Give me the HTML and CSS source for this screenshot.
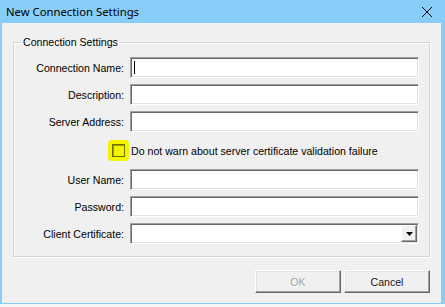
FILE: index.html
```html
<!DOCTYPE html>
<html lang="en">
<head>
  <meta charset="UTF-8">
  <title>New Connection Settings</title>
  <link rel="stylesheet" href="styles.css">
</head>
<body>
  <div class="window">
    <div class="titlebar">
      <span class="title">New Connection Settings</span>
      <svg class="close" width="12" height="12" viewBox="0 0 12 12">
        <path d="M1 1 L11 11 M11 1 L1 11" stroke="#000" stroke-width="1" fill="none"/>
      </svg>
    </div>
    <div class="client">
      <fieldset class="group">
        <legend>Connection Settings</legend>
        <div class="form">
          <label>Connection Name:</label>
          <div class="field"><span class="caret"></span></div>
          <label>Description:</label>
          <div class="field"></div>
          <label>Server Address:</label>
          <div class="field"></div>
          <div class="check-row">
            <span class="mark"><span class="box"></span></span>
            <span>Do not warn about server certificate validation failure</span>
          </div>
          <label>User Name:</label>
          <div class="field"></div>
          <label>Password:</label>
          <div class="field"></div>
          <label>Client Certificate:</label>
          <div class="field combo">
            <span class="drop">
              <svg width="7" height="4" viewBox="0 0 7 4"><path d="M0 0 H7 L3.5 4 Z" fill="#000"/></svg>
            </span>
          </div>
        </div>
      </fieldset>
      <div class="buttons">
        <button class="btn" disabled>OK</button>
        <button class="btn">Cancel</button>
      </div>
    </div>
  </div>
</body>
</html>
```

FILE: styles.css
```css
* { margin: 0; padding: 0; box-sizing: border-box; }
body {
  background: #f4f6f8;
  font-family: 'Liberation Sans', Arial, sans-serif;
  font-size: 10.6px;
  color: #000;
}
.window {
  width: 445px;
  height: 304px;
  background: #88cdf8;
  display: flex;
  flex-direction: column;
}
.titlebar {
  height: 23px;
  display: flex;
  align-items: center;
  justify-content: space-between;
  padding: 0 12px 0 6px;
}
.title {
  font-family: 'Noto Sans', sans-serif;
  font-size: 11.3px;
  color: #000;
}
.client {
  flex: 1;
  margin: 0 4px 1px 2px;
  background: #f0f0f0;
  padding: 13px 11px 0 11px;
}
.group {
  border: 1px solid #d5d5d5;
  box-shadow: inset 1px 1px 0 #fff, 1px 1px 0 #fff;
  padding: 8px 10px 11px 0;
  height: 221px;
}
.group legend {
  margin-left: 7px;
  padding: 0 2px;
  line-height: 13px;
}
.form {
  display: grid;
  grid-template-columns: 110px 289px;
  column-gap: 6px;
  row-gap: 6px;
  align-items: center;
}
.form label {
  text-align: right;
}
.field {
  height: 21px;
  background: #fff;
  border: 1px solid;
  border-color: #a0a0a0 #fff #fff #a0a0a0;
  box-shadow: inset 1px 1px 0 #696969, inset -1px -1px 0 #e3e3e3;
  display: flex;
  align-items: center;
}
.caret {
  width: 1px;
  height: 13px;
  margin-left: 3px;
  background: #000;
}
.check-row {
  grid-column: 1 / 3;
  height: 25px;
  display: flex;
  align-items: center;
  padding-left: 94px;
  gap: 2px;
}
.mark {
  background: #f4f400;
  border-radius: 4px;
  padding: 4px;
  display: flex;
}
.box {
  width: 13px;
  height: 13px;
  border: 1px solid #6f6f00;
  box-shadow: inset 1px 1px 0 #9d9d00;
}
.combo {
  justify-content: flex-end;
  padding-right: 1px;
}
.drop {
  width: 16px;
  height: 17px;
  background: #f0f0f0;
  border: 1px solid;
  border-color: #fff #696969 #696969 #fff;
  box-shadow: inset -1px -1px 0 #a0a0a0;
  display: flex;
  align-items: center;
  justify-content: center;
}
.buttons {
  display: flex;
  justify-content: flex-end;
  gap: 3px;
  margin-top: 13px;
}
.btn {
  width: 86px;
  height: 23px;
  font-family: 'Liberation Sans', Arial, sans-serif;
  font-size: 10.6px;
  font-weight: normal;
  background: #f0f0f0;
  color: #1a1a1a;
  border: 1px solid;
  border-color: #fff #696969 #696969 #fff;
  box-shadow: inset -1px -1px 0 #a0a0a0, inset 1px 1px 0 #e3e3e3;
}
.btn:disabled {
  color: #a0a0a0;
  text-shadow: 1px 1px 0 #fff;
}
```
